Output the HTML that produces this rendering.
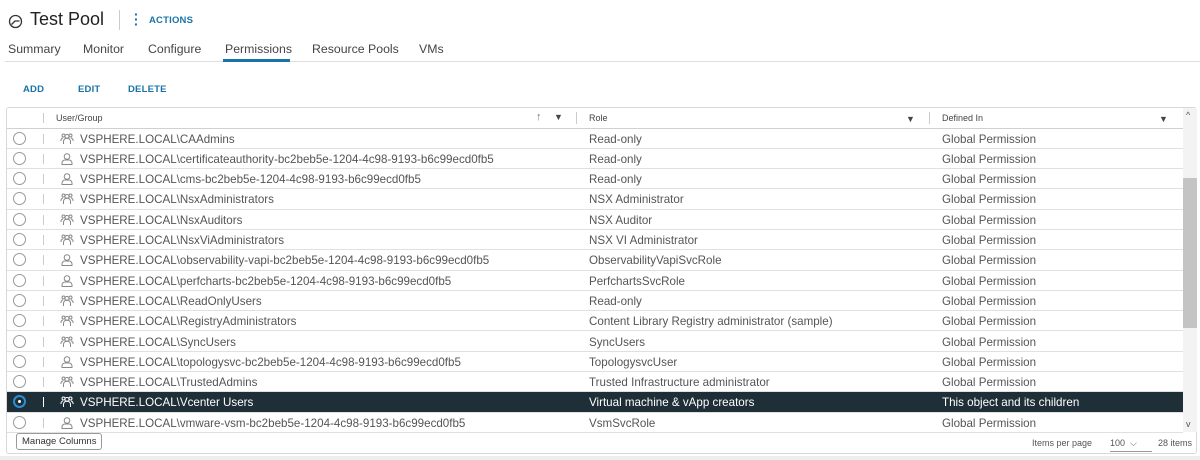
<!DOCTYPE html>
<html><head><meta charset="utf-8"><style>
*{box-sizing:border-box;margin:0;padding:0}
body{width:1200px;height:460px;background:#fff;font-family:"Liberation Sans",sans-serif;color:#333;position:relative;overflow:hidden}
.abs{position:absolute}
.title{left:30px;top:9px;font-size:18px;color:#222}
.tabs span{position:absolute;top:42px;font-size:12.3px;color:#444}
.btn{position:absolute;top:84px;font-size:9.5px;font-weight:bold;color:#1a73a8;letter-spacing:.2px}
.grid{left:6px;top:107px;width:1191px;height:347px;border:1px solid #d8d8d8;border-radius:3px}
.row{position:absolute;left:0;width:1176px;height:20.3px;border-bottom:1px solid #e0e0e0;font-size:11.6px;color:#555}
.row span{position:absolute;top:4px;white-space:nowrap}
.sel{background:#1f2f38;color:#fff}
.rad{position:absolute;left:6px;top:3px;width:13px;height:13px;border:1px solid #999;border-radius:50%;background:#fff}
.vd{position:absolute;left:36px;top:5px;width:1px;height:10px;background:#ccc}
.ic{position:absolute;left:53px;top:3px}
</style></head><body>
<svg class="abs" style="left:8px;top:14px" width="15" height="15" viewBox="0 0 15 15"><circle cx="7.5" cy="7.5" r="6" fill="none" stroke="#333" stroke-width="1.3"/><path d="M3.5 10.5 L7 7 L11.5 7" fill="none" stroke="#333" stroke-width="1.3"/></svg>
<div class="abs title">Test Pool</div>
<div class="abs" style="left:119px;top:10px;width:1px;height:20px;background:#ccc"></div>
<div class="abs" style="left:134px;top:12px;font-size:14px;color:#1a73a8;font-weight:bold;line-height:5px">·<br>·<br>·</div>
<div class="abs" style="left:149px;top:15px;font-size:9.5px;font-weight:bold;color:#1a73a8;letter-spacing:.2px">ACTIONS</div>
<div class="tabs"><span style="left:8px">Summary</span><span style="left:83px">Monitor</span><span style="left:148px">Configure</span><span style="left:225px">Permissions</span><span style="left:312px">Resource Pools</span><span style="left:419px">VMs</span></div>
<div class="abs" style="left:5px;top:61px;width:1195px;height:1px;background:#ddd"></div>
<div class="abs" style="left:223px;top:59px;width:67px;height:3px;background:#1a73a8"></div>
<div class="btn" style="left:23px">ADD</div><div class="btn" style="left:78px">EDIT</div><div class="btn" style="left:128px">DELETE</div>
<div class="abs grid">
<div class="abs" style="left:0;top:0;width:1176px;height:21px;border-bottom:1.5px solid #d0d0d0;font-size:9px;color:#444">
<div class="vd" style="top:5px"></div>
<span class="abs" style="left:49px;top:5px">User/Group</span>
<span class="abs" style="left:529px;top:3px;font-size:11px;color:#777">↑</span>
<span class="abs" style="left:547px;top:4px;font-size:9px">▼</span>
<div class="abs" style="left:569px;top:4px;width:1px;height:12px;background:#ccc"></div>
<span class="abs" style="left:582px;top:5px">Role</span>
<span class="abs" style="left:899px;top:6px;font-size:9px">▼</span>
<div class="abs" style="left:922px;top:4px;width:1px;height:12px;background:#ccc"></div>
<span class="abs" style="left:935px;top:5px">Defined In</span>
<span class="abs" style="left:1152px;top:6px;font-size:9px">▼</span>
</div>
<div id="rows"></div>
<div class="abs" style="left:1176px;top:0;width:14px;height:324px;background:#f3f3f3"></div>
<div class="abs" style="left:1176px;top:70px;width:14px;height:150px;background:#c4c4c4"></div>
<div class="abs" style="left:1179px;top:2px;font-size:9px;color:#555">^</div>
<div class="abs" style="left:1179px;top:311px;font-size:9px;color:#555">v</div>
<div class="abs" style="left:9px;top:325px;padding:2px 5px;border:1px solid #999;border-radius:3px;font-size:9.5px;color:#333">Manage Columns</div>
<div class="abs" style="left:1025px;top:330px;font-size:9px;color:#555">Items per page</div>
<div class="abs" style="left:1103px;top:330px;font-size:9px;color:#555;border-bottom:1px solid #999;width:42px;padding-bottom:2px">100 &nbsp;⌵</div>
<div class="abs" style="left:1151px;top:330px;font-size:9px;color:#555">28 items</div>
</div>
<div class="abs" style="left:0;top:456px;width:1200px;height:4px;background:#eee"></div>
<script>
var G='<svg width="14" height="14" viewBox="0 0 14 14" fill="none" stroke="COL" stroke-width="1"><circle cx="7" cy="4.5" r="2"/><circle cx="3.5" cy="3.5" r="1.5"/><circle cx="10.5" cy="3.5" r="1.5"/><path d="M3.5 12v-2.5a3.5 3.5 0 0 1 7 0V12M1 9a2.5 2.5 0 0 1 2-3M13 9a2.5 2.5 0 0 0-2-3"/></svg>';
var U='<svg width="14" height="14" viewBox="0 0 14 14" fill="none" stroke="COL" stroke-width="1"><circle cx="7" cy="4.5" r="2.8"/><path d="M2 12.5v-1.5a3 3 0 0 1 3-3h4a3 3 0 0 1 3 3v1.5z"/></svg>';
var d=[["g","CAAdmins","Read-only"],["u","certificateauthority-bc2beb5e-1204-4c98-9193-b6c99ecd0fb5","Read-only"],["u","cms-bc2beb5e-1204-4c98-9193-b6c99ecd0fb5","Read-only"],["g","NsxAdministrators","NSX Administrator"],["g","NsxAuditors","NSX Auditor"],["g","NsxViAdministrators","NSX VI Administrator"],["u","observability-vapi-bc2beb5e-1204-4c98-9193-b6c99ecd0fb5","ObservabilityVapiSvcRole"],["u","perfcharts-bc2beb5e-1204-4c98-9193-b6c99ecd0fb5","PerfchartsSvcRole"],["g","ReadOnlyUsers","Read-only"],["g","RegistryAdministrators","Content Library Registry administrator (sample)"],["g","SyncUsers","SyncUsers"],["u","topologysvc-bc2beb5e-1204-4c98-9193-b6c99ecd0fb5","TopologysvcUser"],["g","TrustedAdmins","Trusted Infrastructure administrator"],["g","Vcenter Users","Virtual machine &amp; vApp creators"],["u","vmware-vsm-bc2beb5e-1204-4c98-9193-b6c99ecd0fb5","VsmSvcRole"]];
var h='';
d.forEach(function(r,i){var s=i==13;var c=s?'#fff':'#888';
h+='<div class="row'+(s?' sel':'')+'" style="top:'+(20.5+i*20.3)+'px"><div class="rad" style="'+(s?'border:2px solid #2a8fd6;background:#1f2f38':'')+'">'+(s?'<div style="position:absolute;left:3px;top:3px;width:3px;height:3px;border-radius:50%;background:#fff"></div>':'')+'</div><div class="vd" style="'+(s?'background:#fff':'')+'"></div><div class="ic">'+(r[0]=='g'?G:U).replace(/COL/g,c)+'</div><span style="left:73px">VSPHERE.LOCAL\\'+r[1]+'</span><span style="left:582px">'+r[2]+'</span><span style="left:935px">'+(s?'This object and its children':'Global Permission')+'</span></div>';});
document.getElementById('rows').innerHTML=h;
</script>
</body></html>
